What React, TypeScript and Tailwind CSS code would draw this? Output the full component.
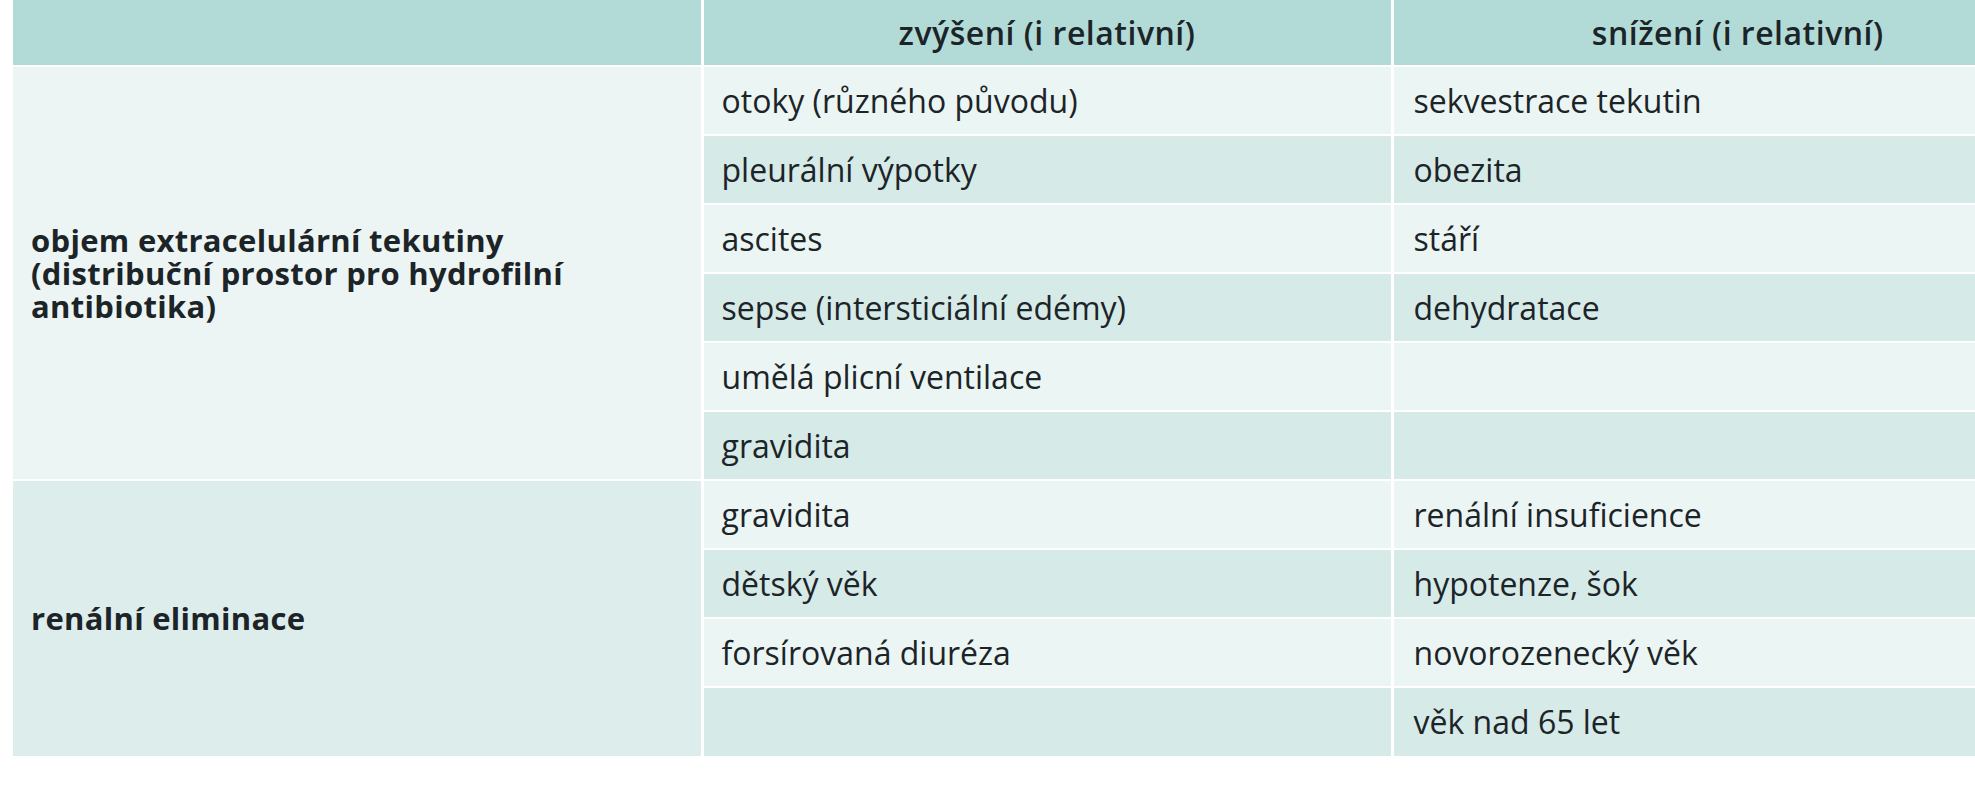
type Row = { up: string; down: string };
type Group = { label: string[]; rows: Row[] };

const groups: Group[] = [
  {
    label: ['objem extracelulární tekutiny', '(distribuční prostor pro hydrofilní', 'antibiotika)'],
    rows: [
      { up: 'otoky (různého původu)', down: 'sekvestrace tekutin' },
      { up: 'pleurální výpotky', down: 'obezita' },
      { up: 'ascites', down: 'stáří' },
      { up: 'sepse (intersticiální edémy)', down: 'dehydratace' },
      { up: 'umělá plicní ventilace', down: '' },
      { up: 'gravidita', down: '' },
    ],
  },
  {
    label: ['renální eliminace'],
    rows: [
      { up: 'gravidita', down: 'renální insuficience' },
      { up: 'dětský věk', down: 'hypotenze, šok' },
      { up: 'forsírovaná diuréza', down: 'novorozenecký věk' },
      { up: '', down: 'věk nad 65 let' },
    ],
  },
];

export default function App() {
  return <div className="min-h-[800px] w-full overflow-hidden bg-white pl-[13px] font-['Open_Sans',sans-serif] text-[32px] leading-[40px] text-[#1c2428]">
    <table className="w-[2069px] table-fixed border-collapse">
      <colgroup><col className="w-[689px]" /><col className="w-[690px]" /><col className="w-[690px]" /></colgroup>
      <thead>
        <tr className="h-[66px] bg-[#b2dbd7]">
          <th />
          <th className="border-l-[3px] border-white text-center font-semibold tracking-[0.5px]">zvýšení (i relativní)</th>
          <th className="border-l-[3px] border-white text-center font-semibold tracking-[0.5px]">snížení (i relativní)</th>
        </tr>
      </thead>
      <tbody>
        {groups.map((g, gi) => g.rows.map((r, ri) => {
          const dark = ri % 2 === 1;
          const bg = dark ? 'bg-[#d6eae8]' : 'bg-[#ebf5f4]';
          return <tr key={`${gi}-${ri}`} className="h-[69px]">
            {ri === 0 && <td rowSpan={g.rows.length} className={`border-t-2 border-white px-[18px] align-middle text-[31px] font-bold leading-[33px] tracking-[0.3px] ${gi === 0 ? 'bg-[#ecf5f4]' : 'bg-[#dcedec]'}`}>
              {g.label.map((l) => <div key={l}>{l}</div>)}
            </td>}
            <td className={`border-t-2 border-l-[3px] border-white px-[18px] ${bg}`}>{r.up}</td>
            <td className={`border-t-2 border-l-[3px] border-white px-[20px] ${bg}`}>{r.down}</td>
          </tr>;
        }))}
      </tbody>
    </table>
  </div>;
}
